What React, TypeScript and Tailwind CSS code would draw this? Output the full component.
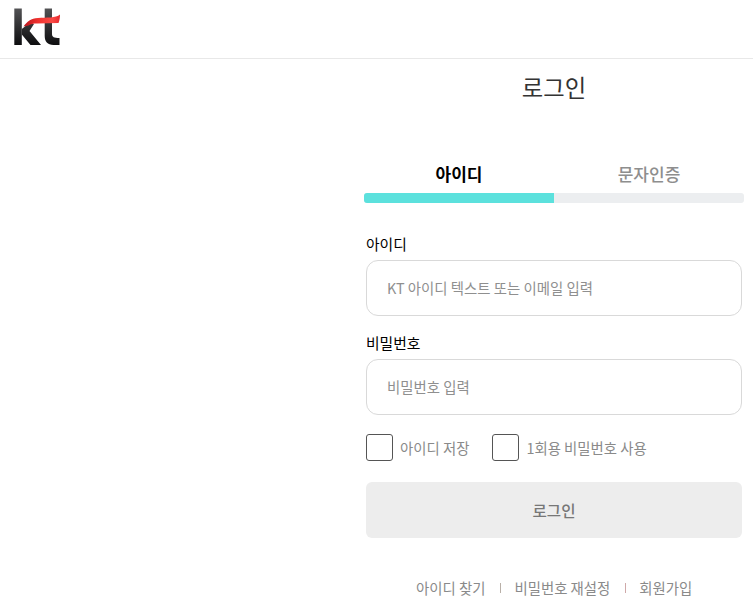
const font = { fontFamily: '"Noto Sans CJK KR", "Noto Sans", sans-serif' };

function Logo() {
  return (
    <svg width="48" height="40" viewBox="0 0 48 40" className="block">
      <defs>
        <linearGradient id="dk" gradientUnits="userSpaceOnUse" x1="0" y1="0" x2="0" y2="37">
          <stop offset="0" stopColor="#545456" />
          <stop offset="0.55" stopColor="#2c2c2e" />
          <stop offset="1" stopColor="#0e0e10" />
        </linearGradient>
        <linearGradient id="rd" x1="0" y1="0" x2="1" y2="0">
          <stop offset="0" stopColor="#b8141c" />
          <stop offset="0.4" stopColor="#f0322f" />
          <stop offset="0.8" stopColor="#fa4a45" />
          <stop offset="1" stopColor="#e8262c" />
        </linearGradient>
      </defs>
      <path d="M0.3 0.5 H7.8 V37 H0.3 Z" fill="url(#dk)" />
      <path d="M7.8 21 L14 16 H20 L15.5 23 L27 37 H16.5 L7.8 26.5 Z" fill="url(#dk)" />
      <path d="M30.7 0.5 H38 V12 H30.7 Z M30.7 14 H38 V26 C38 29 40 30 45.5 30 V37 H39.5 C33.5 37 30.7 33.5 30.7 28 Z" fill="url(#dk)" />
      <path d="M9.5 18.5 C13 13.5 17 10.5 24 10 C32 9.5 42 10 46 6.5 C46 9.5 45.5 12.5 44.5 15 L23 15.5 C19.5 15.5 17 16 14.5 17.5 Z" fill="url(#rd)" />
    </svg>
  );
}

function Field({ label, placeholder }: { label: string; placeholder: string }) {
  return (
    <div>
      <label className="block text-[14.8px] leading-[20px] text-black mb-[6px] pl-[2px]">{label}</label>
      <div className="ml-[2px] mr-[2px] h-[56px] rounded-[12px] border border-[#d9d9d9] flex items-center pl-[20px] text-[14.4px] text-[#8f8f8f]">
        {placeholder}
      </div>
    </div>
  );
}

function Check({ label }: { label: string }) {
  return (
    <div className="flex items-center gap-[7px]">
      <span className="w-[27px] h-[27px] rounded-[3px] border-[1.5px] border-[#555555] bg-white" />
      <span className="text-[14.4px] text-[#8a8a8a]">{label}</span>
    </div>
  );
}

export default function App() {
  return (
    <div style={font} className="w-[753px] h-[606px] overflow-hidden bg-white">
      <header className="h-[59px] border-b border-[#e8e8e8] pl-[14px] pt-[8px]">
        <Logo />
      </header>
      <main className="ml-[364px] w-[380px]">
        <h1 className="text-center text-[23.3px] leading-[34px] text-[#333333] pt-[11px]">로그인</h1>
        <div className="mt-[57px] flex text-[17px] leading-[26px] font-medium">
          <div className="w-1/2 text-center font-bold text-black">아이디</div>
          <div className="w-1/2 text-center text-[#8e8e8e]">문자인증</div>
        </div>
        <div className="mt-[6px] h-[10px] rounded-[3px] bg-[#eceef0] overflow-hidden">
          <div className="h-full w-1/2 bg-[#5ce1dd]" />
        </div>
        <div className="mt-[31px] flex flex-col gap-[17px]">
          <Field label="아이디" placeholder="KT 아이디 텍스트 또는 이메일 입력" />
          <Field label="비밀번호" placeholder="비밀번호 입력" />
        </div>
        <div className="mt-[19px] ml-[2px] flex gap-[23px]">
          <Check label="아이디 저장" />
          <Check label="1회용 비밀번호 사용" />
        </div>
        <button className="mt-[21px] ml-[2px] block w-[376px] h-[56px] pt-[1px] rounded-[6px] bg-[#ededed] text-[15.6px] font-medium text-[#777777]">
          로그인
        </button>
        <div className="mt-[38px] ml-[52px] flex items-center text-[14.4px] leading-[24px] text-[#8a8a8a]">
          <span>아이디 찾기</span>
          <span className="ml-[15px] mr-[13px] w-px h-[10px] bg-[#b9b0a8]" />
          <span>비밀번호 재설정</span>
          <span className="ml-[15px] mr-[13px] w-px h-[10px] bg-[#cfa9a9]" />
          <span>회원가입</span>
        </div>
      </main>
    </div>
  );
}
